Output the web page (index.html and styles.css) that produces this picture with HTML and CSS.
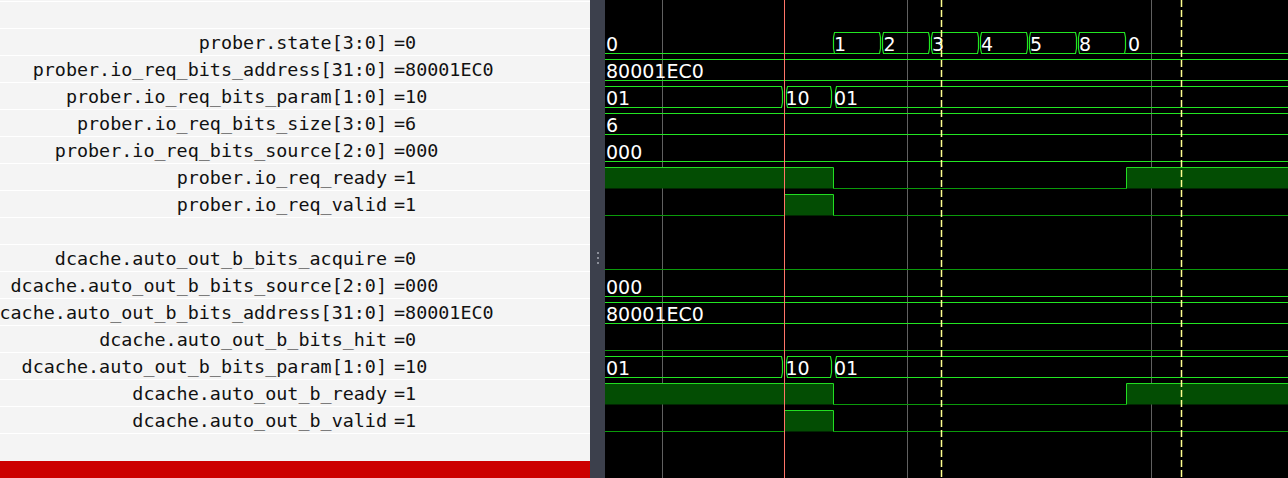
FILE: index.html
```html
<!DOCTYPE html>
<html>
<head>
<meta charset="utf-8">
<title>Waveform viewer</title>
<link rel="stylesheet" href="styles.css">
</head>
<body>
<div class="app">
  <div class="names">
    <div class="rows">
      <div class="row"></div>
      <div class="row"><span class="name">prober.state[3:0]</span><span class="val">=0</span></div>
      <div class="row"><span class="name">prober.io_req_bits_address[31:0]</span><span class="val">=80001EC0</span></div>
      <div class="row"><span class="name">prober.io_req_bits_param[1:0]</span><span class="val">=10</span></div>
      <div class="row"><span class="name">prober.io_req_bits_size[3:0]</span><span class="val">=6</span></div>
      <div class="row"><span class="name">prober.io_req_bits_source[2:0]</span><span class="val">=000</span></div>
      <div class="row"><span class="name">prober.io_req_ready</span><span class="val">=1</span></div>
      <div class="row"><span class="name">prober.io_req_valid</span><span class="val">=1</span></div>
      <div class="row"></div>
      <div class="row"><span class="name">dcache.auto_out_b_bits_acquire</span><span class="val">=0</span></div>
      <div class="row"><span class="name">dcache.auto_out_b_bits_source[2:0]</span><span class="val">=000</span></div>
      <div class="row"><span class="name">dcache.auto_out_b_bits_address[31:0]</span><span class="val">=80001EC0</span></div>
      <div class="row"><span class="name">dcache.auto_out_b_bits_hit</span><span class="val">=0</span></div>
      <div class="row"><span class="name">dcache.auto_out_b_bits_param[1:0]</span><span class="val">=10</span></div>
      <div class="row"><span class="name">dcache.auto_out_b_ready</span><span class="val">=1</span></div>
      <div class="row"><span class="name">dcache.auto_out_b_valid</span><span class="val">=1</span></div>
      <div class="row"></div>
    </div>
    <div class="status"></div>
  </div>
  <div class="splitter"><span class="dot"></span><span class="dot"></span><span class="dot"></span></div>
  <div class="waves">
    <svg class="canvas" width="683" height="478" viewBox="605 0 683 478" xmlns="http://www.w3.org/2000/svg">
      <g class="grid">
        <line x1="662.5" y1="0" x2="662.5" y2="478"/>
        <line x1="907.5" y1="0" x2="907.5" y2="478"/>
        <line x1="1151.5" y1="0" x2="1151.5" y2="478"/>
      </g>
      <g class="fill">
        <rect x="605" y="168" width="228.5" height="20.5"/>
        <rect x="1126.5" y="168" width="161.5" height="20.5"/>
        <rect x="784.5" y="195" width="49" height="20.5"/>
        <rect x="605" y="384" width="228.5" height="20.5"/>
        <rect x="1126.5" y="384" width="161.5" height="20.5"/>
        <rect x="784.5" y="411" width="49" height="20.5"/>
      </g>
      <g class="low">
        <path d="M833.5 188.5 H1126.5"/>
        <path d="M605 215.5 H784.5 M833.5 215.5 H1288"/>
        <path d="M605 269.5 H1288"/>
        <path d="M605 350.5 H1288"/>
        <path d="M833.5 404.5 H1126.5"/>
        <path d="M605 431.5 H784.5 M833.5 431.5 H1288"/>
      </g>
      <g class="high">
        <path d="M605 167.5 H833.5 V188.5 M1126.5 188.5 V167.5 H1288"/>
        <path d="M784.5 215.5 V194.5 H833.5 V215.5"/>
        <path d="M605 383.5 H833.5 V404.5 M1126.5 404.5 V383.5 H1288"/>
        <path d="M784.5 431.5 V410.5 H833.5 V431.5"/>
      </g>
      <g class="bus">
        <path d="M605 53.5 H834.5"/>
        <polygon points="834.5,32.5 879.5,32.5 880.5,37.5 880.5,48.5 879.5,53.5 834.5,53.5 833.5,48.5 833.5,37.5"/>
        <polygon points="883.5,32.5 928.5,32.5 929.5,37.5 929.5,48.5 928.5,53.5 883.5,53.5 882.5,48.5 882.5,37.5"/>
        <polygon points="932.5,32.5 977.5,32.5 978.5,37.5 978.5,48.5 977.5,53.5 932.5,53.5 931.5,48.5 931.5,37.5"/>
        <polygon points="981.5,32.5 1026.5,32.5 1027.5,37.5 1027.5,48.5 1026.5,53.5 981.5,53.5 980.5,48.5 980.5,37.5"/>
        <polygon points="1030.5,32.5 1075.5,32.5 1076.5,37.5 1076.5,48.5 1075.5,53.5 1030.5,53.5 1029.5,48.5 1029.5,37.5"/>
        <polygon points="1079.5,32.5 1124.5,32.5 1125.5,37.5 1125.5,48.5 1124.5,53.5 1079.5,53.5 1078.5,48.5 1078.5,37.5"/>
        <path d="M1124.5 53.5 H1288"/>
        <path d="M605 59.5 H1288 M605 80.5 H1288"/>
        <path d="M605 86.5 H781.5 L782.5 91.5 V102.5 L781.5 107.5 H605"/>
        <polygon points="787.5,86.5 830.5,86.5 831.5,91.5 831.5,102.5 830.5,107.5 787.5,107.5 786.5,102.5 786.5,91.5"/>
        <path d="M1288 86.5 H836.5 L835.5 91.5 V102.5 L836.5 107.5 H1288"/>
        <path d="M605 113.5 H1288 M605 134.5 H1288"/>
        <path d="M605 161.5 H1288"/>
        <path d="M605 296.5 H1288"/>
        <path d="M605 302.5 H1288 M605 323.5 H1288"/>
        <path d="M605 356.5 H781.5 L782.5 361.5 V372.5 L781.5 377.5 H605"/>
        <polygon points="787.5,356.5 830.5,356.5 831.5,361.5 831.5,372.5 830.5,377.5 787.5,377.5 786.5,372.5 786.5,361.5"/>
        <path d="M1288 356.5 H836.5 L835.5 361.5 V372.5 L836.5 377.5 H1288"/>
      </g>
      <g class="vals">
        <text x="606" y="51">0</text>
        <text x="834" y="51">1</text>
        <text x="883.5" y="51">2</text>
        <text x="932" y="51">3</text>
        <text x="981" y="51">4</text>
        <text x="1030" y="51">5</text>
        <text x="1079" y="51">8</text>
        <text x="1128" y="51">0</text>
        <text x="606" y="78">80001EC0</text>
        <text x="606" y="105">01</text>
        <text x="785.5" y="105">10</text>
        <text x="834" y="105">01</text>
        <text x="606" y="132">6</text>
        <text x="606" y="159">000</text>
        <text x="606" y="294">000</text>
        <text x="606" y="321">80001EC0</text>
        <text x="606" y="375">01</text>
        <text x="785.5" y="375">10</text>
        <text x="834" y="375">01</text>
      </g>
      <line class="cursor" x1="784.5" y1="0" x2="784.5" y2="478"/>
      <line class="marker" x1="941.5" y1="0" x2="941.5" y2="478"/>
      <line class="marker" x1="1181.5" y1="0" x2="1181.5" y2="478"/>
    </svg>
  </div>
</div>
</body>
</html>
```

FILE: styles.css
```css
html, body {
  margin: 0;
  padding: 0;
  background: #000;
}

.app {
  display: flex;
  width: 1288px;
  height: 478px;
  overflow: hidden;
}

.names {
  flex: 0 0 590px;
  display: flex;
  flex-direction: column;
  background: #f4f4f4;
  overflow: hidden;
}

.rows {
  flex: 1;
  padding-top: 1px;
}

.row {
  height: 26px;
  border-top: 1px solid #ffffff;
  display: flex;
  align-items: center;
  font-family: "DejaVu Sans Mono", "Liberation Mono", monospace;
  font-size: 18.4px;
  color: #111;
  white-space: pre;
}

.name {
  flex: none;
  width: 387px;
  min-width: 0;
  display: flex;
  justify-content: flex-end;
  padding-top: 1px;
}

.val {
  margin-left: 7px;
  padding-top: 1px;
}

.status {
  height: 17px;
  background: #cc0000;
}

.splitter {
  flex: 0 0 15px;
  background: #3c404c;
  display: flex;
  flex-direction: column;
  align-items: center;
  gap: 3px;
  padding-top: 252px;
  box-sizing: border-box;
}

.dot {
  width: 2px;
  height: 2px;
  background: #8b8e98;
}

.waves {
  flex: 1;
  background: #000;
}

.canvas {
  display: block;
}

.grid line {
  stroke: #606060;
  stroke-width: 1;
}

.fill rect {
  fill: #034d03;
}

.low path {
  fill: none;
  stroke: #0a9a0a;
  stroke-width: 1;
}

.high path {
  fill: none;
  stroke: #22dd22;
  stroke-width: 1;
}

.bus path,
.bus polygon {
  fill: none;
  stroke: #22e622;
  stroke-width: 1.2;
}

.vals text {
  font-family: "DejaVu Sans", "Noto Sans", sans-serif;
  font-size: 19px;
  fill: #ffffff;
}

.cursor {
  stroke: #ff7468;
  stroke-width: 1;
}

.marker {
  stroke: #ffff90;
  stroke-width: 1.5;
  stroke-dasharray: 7 3;
}
```
